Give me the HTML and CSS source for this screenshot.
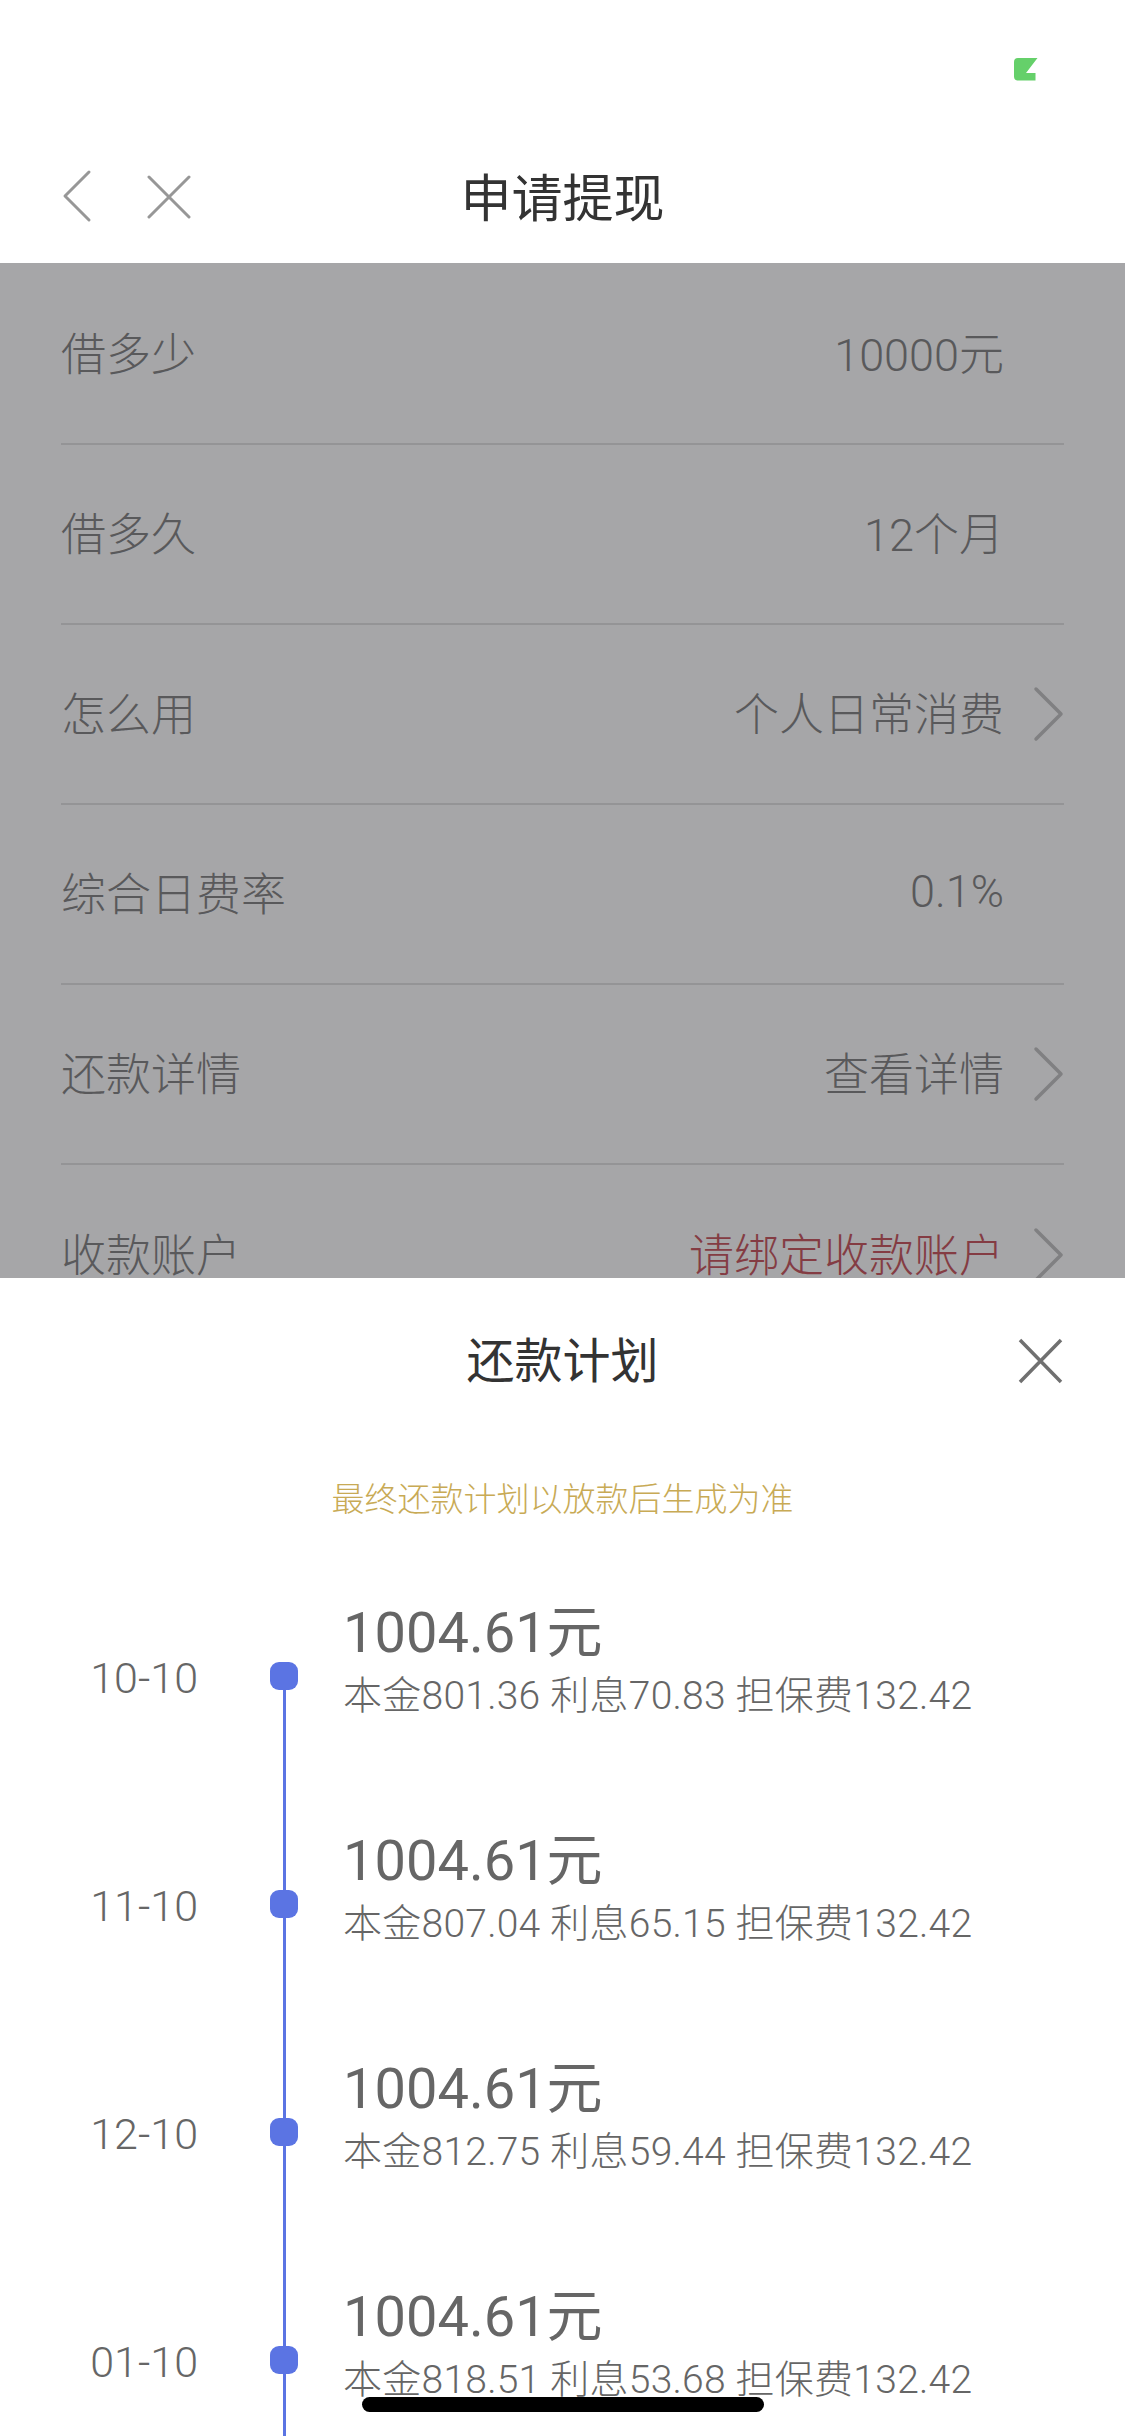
FILE: index.html
```html
<!DOCTYPE html>
<html lang="zh-CN">
    <head>
        <meta charset="utf-8">
        <title>申请提现</title>
        <link rel="stylesheet" href="styles.css">
    </head>
    <body>
        <div class="phone">
            <div class="status-bar">
                <svg class="battery" width="24" height="23" viewBox="0 0 24 23">
                    <path d="M4 0H23.500L12 15H21.500V22.500H4Q0 22.500 0 18.500V4Q0 0 4 0Z" fill="#65d06a"/>
                </svg>
            </div>

            <header class="nav">
                <svg class="nav-back" width="30" height="54" viewBox="0 0 30 54">
                    <path d="M27 3L3 27L27 51" fill="none" stroke="#979797" stroke-width="3" stroke-linecap="round" stroke-linejoin="round"/>
                </svg>
                <svg class="nav-close" width="44" height="44" viewBox="0 0 44 44">
                    <path d="M2 2L42 42M42 2L2 42" fill="none" stroke="#979797" stroke-width="3" stroke-linecap="round"/>
                </svg>
                <h1 class="nav-title">申请提现</h1>
            </header>

            <main class="form">
                <div class="form-row">
                    <span class="form-label">借多少</span>
                    <span class="form-value">10000元</span>
                    <span class="form-arrow"></span>
                </div>
                <div class="form-row">
                    <span class="form-label">借多久</span>
                    <span class="form-value">12个月</span>
                    <span class="form-arrow"></span>
                </div>
                <div class="form-row">
                    <span class="form-label">怎么用</span>
                    <span class="form-value">个人日常消费</span>
                    <span class="form-arrow">
                        <svg width="32" height="56" viewBox="0 0 32 56"><path d="M3 3L28 28L3 53" fill="none" stroke="#808082" stroke-width="3.500" stroke-linecap="round" stroke-linejoin="round"/></svg>
                    </span>
                </div>
                <div class="form-row">
                    <span class="form-label">综合日费率</span>
                    <span class="form-value">0.1%</span>
                    <span class="form-arrow"></span>
                </div>
                <div class="form-row">
                    <span class="form-label">还款详情</span>
                    <span class="form-value">查看详情</span>
                    <span class="form-arrow">
                        <svg width="32" height="56" viewBox="0 0 32 56"><path d="M3 3L28 28L3 53" fill="none" stroke="#808082" stroke-width="3.500" stroke-linecap="round" stroke-linejoin="round"/></svg>
                    </span>
                </div>
                <div class="form-row">
                    <span class="form-label">收款账户</span>
                    <span class="form-value red">请绑定收款账户</span>
                    <span class="form-arrow">
                        <svg width="32" height="56" viewBox="0 0 32 56"><path d="M3 3L28 28L3 53" fill="none" stroke="#808082" stroke-width="3.500" stroke-linecap="round" stroke-linejoin="round"/></svg>
                    </span>
                </div>
            </main>

            <section class="sheet">
                <div class="sheet-head">
                    <h2 class="sheet-title">还款计划</h2>
                    <svg class="sheet-close" width="45" height="46" viewBox="0 0 45 46">
                        <path d="M2 2L43 44M43 2L2 44" fill="none" stroke="#707070" stroke-width="3.500"/>
                    </svg>
                </div>
                <p class="sheet-note">最终还款计划以放款后生成为准</p>

                <div class="plan">
                    <div class="plan-item">
                        <span class="plan-date">10-10</span>
                        <span class="plan-track"><i class="plan-dot"></i></span>
                        <div class="plan-body">
                            <div class="plan-amount">1004.61元</div>
                            <div class="plan-detail">本金801.36 利息70.83 担保费132.42</div>
                        </div>
                    </div>
                    <div class="plan-item">
                        <span class="plan-date">11-10</span>
                        <span class="plan-track"><i class="plan-dot"></i></span>
                        <div class="plan-body">
                            <div class="plan-amount">1004.61元</div>
                            <div class="plan-detail">本金807.04 利息65.15 担保费132.42</div>
                        </div>
                    </div>
                    <div class="plan-item">
                        <span class="plan-date">12-10</span>
                        <span class="plan-track"><i class="plan-dot"></i></span>
                        <div class="plan-body">
                            <div class="plan-amount">1004.61元</div>
                            <div class="plan-detail">本金812.75 利息59.44 担保费132.42</div>
                        </div>
                    </div>
                    <div class="plan-item">
                        <span class="plan-date">01-10</span>
                        <span class="plan-track"><i class="plan-dot"></i></span>
                        <div class="plan-body">
                            <div class="plan-amount">1004.61元</div>
                            <div class="plan-detail">本金818.51 利息53.68 担保费132.42</div>
                        </div>
                    </div>
                </div>
            </section>

            <div class="home-bar"></div>
        </div>
    </body>
</html>
```

FILE: styles.css
```css
* {
    box-sizing: border-box;
}

html, body {
    margin: 0;
    padding: 0;
}

body {
    font-family: Roboto, "Noto Sans CJK SC", sans-serif;
    font-weight: 300;
    background-color: #fff;
}

.phone {
    position: relative;
    width: 1125px;
    height: 2436px;
    overflow: hidden;
}

.status-bar {
    height: 132px;
    padding: 58px 87px 0 0;
    display: flex;
    justify-content: flex-end;
}

.nav {
    position: relative;
    height: 131px;
    padding-bottom: 6px;
    display: flex;
    align-items: center;
    justify-content: center;
}

.nav-back {
    position: absolute;
    left: 62px;
    top: 37px;
}

.nav-close {
    position: absolute;
    left: 147px;
    top: 43px;
}

.nav-title {
    margin: 0;
    font-size: 51px;
    font-weight: 400;
    color: #333;
}

.form {
    padding: 2px 61px 0;
    height: 1016px;
    background-color: #a6a6a8;
}

.form-row {
    height: 180px;
    padding-bottom: 6px;
    display: flex;
    align-items: center;
    border-bottom: 2px solid #949496;
    font-size: 45px;
    color: #59595b;
}

.form-row:last-child {
    border-bottom: none;
}

.form-label {
    flex: 1;
}

.form-value.red {
    color: #843c43;
}

.form-arrow {
    width: 32px;
    height: 56px;
    margin-left: 29px;
    margin-right: -1px;
    margin-top: 6px;
}

.sheet {
    position: absolute;
    left: 0;
    right: 0;
    top: 1278px;
    bottom: 0;
    background-color: #fff;
}

.sheet-head {
    position: relative;
    height: 166px;
    padding-bottom: 9px;
    display: flex;
    align-items: center;
    justify-content: center;
}

.sheet-title {
    margin: 0;
    font-size: 48px;
    font-weight: 400;
    color: #333;
}

.sheet-close {
    position: absolute;
    right: 62px;
    top: 60px;
}

.sheet-note {
    margin: 0;
    height: 110px;
    line-height: 112px;
    text-align: center;
    font-size: 33px;
    color: #c8aa55;
}

.plan {
    padding-top: 46px;
}

.plan-item {
    height: 228px;
    display: grid;
    grid-template-columns: 198px 28px 1fr;
    column-gap: 72px;
    color: #666;
}

.plan-body {
    margin-left: -27px;
}

.plan-date {
    padding-top: 53px;
    line-height: 50px;
    font-size: 43px;
    text-align: right;
}

.plan-track {
    display: block;
    padding-top: 62px;
    background: linear-gradient(#5b74e3, #5b74e3) center top / 3px 100% no-repeat;
}

.plan-item:first-child .plan-track {
    background-position: center 75px;
}

.plan-dot {
    display: block;
    width: 28px;
    height: 28px;
    border-radius: 9px;
    background-color: #5b74e3;
}

.plan-amount {
    height: 66px;
    line-height: 66px;
    font-size: 56px;
    font-weight: 400;
}

.plan-detail {
    line-height: 60px;
    font-size: 39px;
    letter-spacing: 0.25px;
}

.home-bar {
    position: absolute;
    left: 362px;
    top: 2397px;
    width: 402px;
    height: 15px;
    border-radius: 8px;
    background-color: #000;
}
```
